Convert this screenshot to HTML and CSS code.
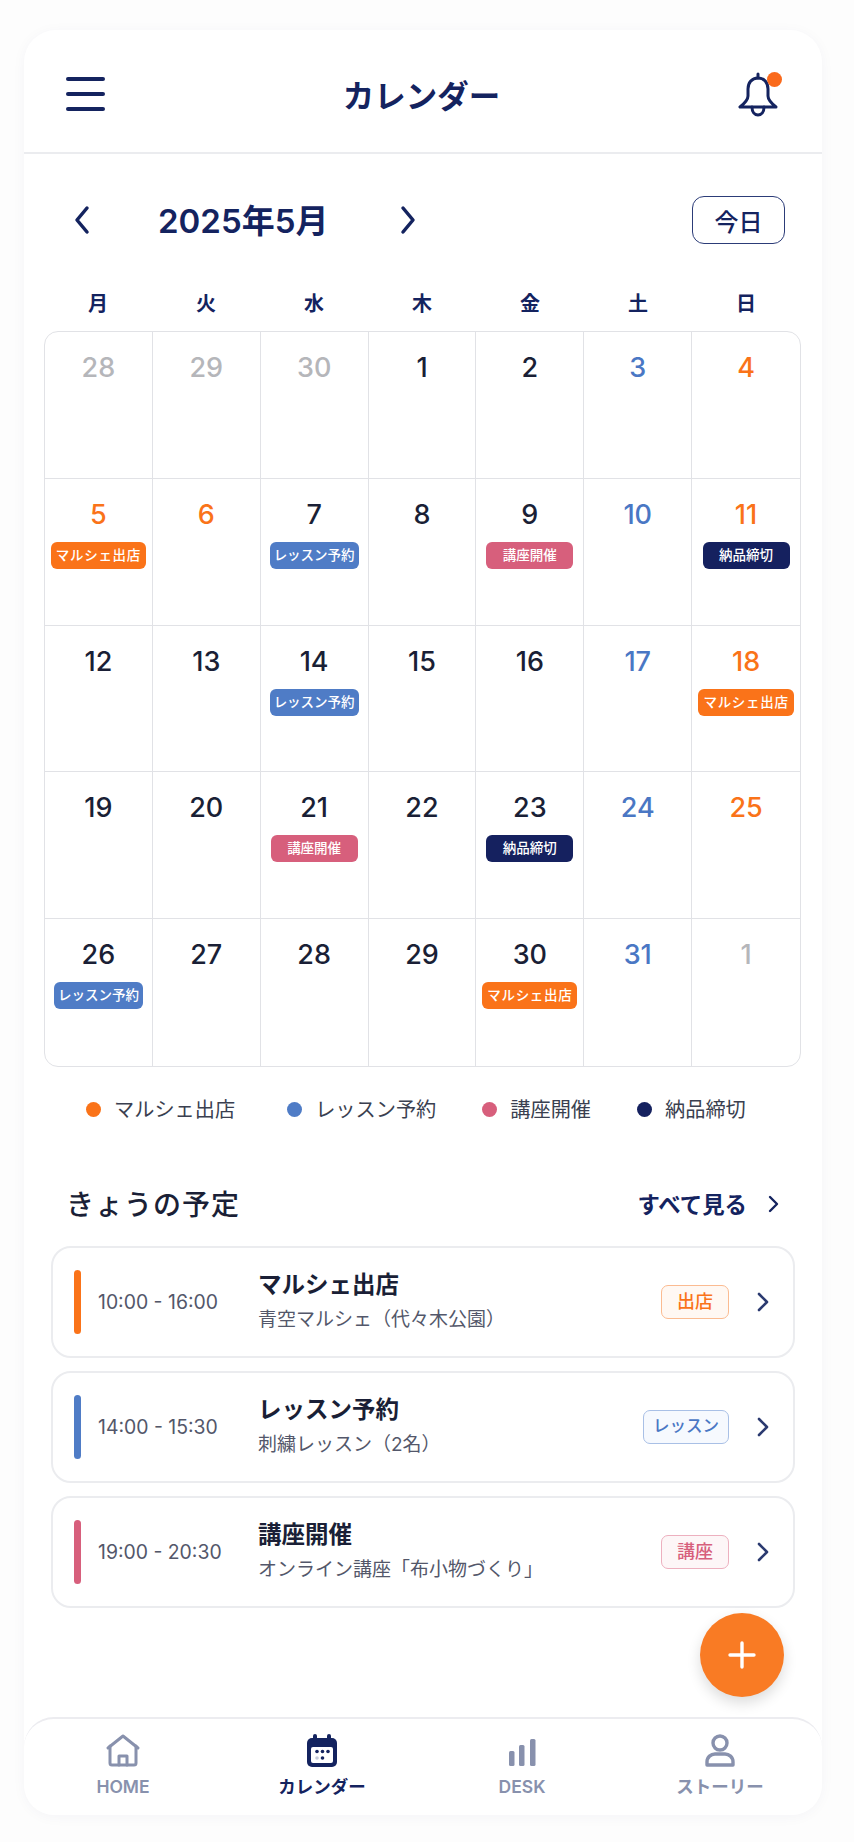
FILE: index.html
```html
<!DOCTYPE html>
<html lang="ja">
<head>
  <meta charset="UTF-8">
  <meta name="viewport" content="width=device-width, initial-scale=1.0">
  <title>カレンダー</title>
  <link rel="stylesheet" href="styles.css">
</head>
<body>
  <div class="phone">
    <header class="topbar">
      <div class="menu"><span></span><span></span><span></span></div>
      <h1 class="topbar-title">カレンダー</h1>
      <div class="bell">
        <svg width="44" height="46" viewBox="0 0 44 46" fill="none" stroke="#14235f" stroke-width="3" stroke-linecap="round" stroke-linejoin="round">
          <path d="M20 3v4"/>
          <path d="M20 7c-6.500 0-10 5-10 11v7c0 4-3 7-8 11h36c-5-4-8-7-8-11v-7c0-6-3.500-11-10-11z"/>
          <path d="M14 36c0 5 2.500 8 6 8s6-3 6-8"/>
        </svg>
        <span class="bell-dot"></span>
      </div>
    </header>

    <div class="month-row">
      <svg class="month-prev" width="20" height="30" viewBox="0 0 20 30" fill="none" stroke="#14235f" stroke-width="3.500" stroke-linecap="round" stroke-linejoin="round"><path d="M15 3L5 15l10 12"/></svg>
      <div class="month-title">2025年5月</div>
      <svg class="month-next" width="20" height="30" viewBox="0 0 20 30" fill="none" stroke="#14235f" stroke-width="3.500" stroke-linecap="round" stroke-linejoin="round"><path d="M5 3l10 12L5 27"/></svg>
      <button class="today">今日</button>
    </div>

    <div class="weekdays">
      <div>月</div><div>火</div><div>水</div><div>木</div><div>金</div><div>土</div><div>日</div>
    </div>

    <div class="grid">
      <div class="cell muted">28</div>
      <div class="cell muted">29</div>
      <div class="cell muted">30</div>
      <div class="cell">1</div>
      <div class="cell">2</div>
      <div class="cell sat">3</div>
      <div class="cell sun">4</div>

      <div class="cell sun">5<span class="tag orange">マルシェ出店</span></div>
      <div class="cell sun">6</div>
      <div class="cell">7<span class="tag blue">レッスン予約</span></div>
      <div class="cell">8</div>
      <div class="cell">9<span class="tag pink">講座開催</span></div>
      <div class="cell sat">10</div>
      <div class="cell sun">11<span class="tag navy">納品締切</span></div>

      <div class="cell">12</div>
      <div class="cell">13</div>
      <div class="cell">14<span class="tag blue">レッスン予約</span></div>
      <div class="cell">15</div>
      <div class="cell">16</div>
      <div class="cell sat">17</div>
      <div class="cell sun">18<span class="tag orange">マルシェ出店</span></div>

      <div class="cell">19</div>
      <div class="cell">20</div>
      <div class="cell">21<span class="tag pink">講座開催</span></div>
      <div class="cell">22</div>
      <div class="cell">23<span class="tag navy">納品締切</span></div>
      <div class="cell sat">24</div>
      <div class="cell sun">25</div>

      <div class="cell">26<span class="tag blue">レッスン予約</span></div>
      <div class="cell">27</div>
      <div class="cell">28</div>
      <div class="cell">29</div>
      <div class="cell">30<span class="tag orange">マルシェ出店</span></div>
      <div class="cell sat">31</div>
      <div class="cell muted">1</div>
    </div>

    <div class="legend">
      <div class="legend-item"><span class="dot orange"></span>マルシェ出店</div>
      <div class="legend-item"><span class="dot blue"></span>レッスン予約</div>
      <div class="legend-item"><span class="dot pink"></span>講座開催</div>
      <div class="legend-item"><span class="dot navy"></span>納品締切</div>
    </div>

    <div class="section-head">
      <h2 class="section-title">きょうの予定</h2>
      <div class="see-all">すべて見る
        <svg class="see-all-arrow" width="14" height="20" viewBox="0 0 14 20" fill="none" stroke="#14235f" stroke-width="2.400" stroke-linecap="round" stroke-linejoin="round"><path d="M3 3l7 7-7 7"/></svg>
      </div>
    </div>

    <div class="events">
      <div class="event">
        <span class="event-bar orange"></span>
        <div class="event-time">10:00 - 16:00</div>
        <div class="event-body">
          <div class="event-name">マルシェ出店</div>
          <div class="event-place">青空マルシェ（代々木公園）</div>
        </div>
        <span class="badge badge-orange">出店</span>
        <svg class="event-arrow" width="14" height="22" viewBox="0 0 14 22" fill="none" stroke="#2b3a70" stroke-width="2.600" stroke-linecap="round" stroke-linejoin="round"><path d="M3 3l8 8-8 8"/></svg>
      </div>
      <div class="event">
        <span class="event-bar blue"></span>
        <div class="event-time">14:00 - 15:30</div>
        <div class="event-body">
          <div class="event-name">レッスン予約</div>
          <div class="event-place">刺繍レッスン（2名）</div>
        </div>
        <span class="badge badge-blue">レッスン</span>
        <svg class="event-arrow" width="14" height="22" viewBox="0 0 14 22" fill="none" stroke="#2b3a70" stroke-width="2.600" stroke-linecap="round" stroke-linejoin="round"><path d="M3 3l8 8-8 8"/></svg>
      </div>
      <div class="event">
        <span class="event-bar pink"></span>
        <div class="event-time">19:00 - 20:30</div>
        <div class="event-body">
          <div class="event-name">講座開催</div>
          <div class="event-place">オンライン講座「布小物づくり」</div>
        </div>
        <span class="badge badge-pink">講座</span>
        <svg class="event-arrow" width="14" height="22" viewBox="0 0 14 22" fill="none" stroke="#2b3a70" stroke-width="2.600" stroke-linecap="round" stroke-linejoin="round"><path d="M3 3l8 8-8 8"/></svg>
      </div>
    </div>

    <div class="fab">
      <svg width="30" height="30" viewBox="0 0 30 30" stroke="#fff" stroke-width="3.400" stroke-linecap="round"><path d="M15 3v24M3 15h24"/></svg>
    </div>

    <nav class="tabbar">
      <div class="tab">
        <svg width="36" height="33" viewBox="0 0 36 33" fill="none" stroke="#8891ad" stroke-width="3" stroke-linecap="round" stroke-linejoin="round">
          <path d="M3 14L18 2l15 12"/>
          <path d="M5 12v17a2 2 0 0 0 2 2h22a2 2 0 0 0 2-2V12"/>
          <path d="M14 31v-9h8v9"/>
        </svg>
        <span>HOME</span>
      </div>
      <div class="tab active">
        <svg width="36" height="33" viewBox="0 0 36 33">
          <rect x="3" y="4" width="30" height="29" rx="5" fill="#14235f"/>
          <rect x="9" y="0" width="4" height="8" rx="2" fill="#14235f"/>
          <rect x="23" y="0" width="4" height="8" rx="2" fill="#14235f"/>
          <rect x="7" y="13" width="22" height="16" rx="2" fill="#fff"/>
          <circle cx="13" cy="17.500" r="1.800" fill="#14235f"/>
          <circle cx="18.500" cy="17.500" r="1.800" fill="#14235f"/>
          <circle cx="24" cy="17.500" r="1.800" fill="#14235f"/>
          <circle cx="13" cy="24" r="1.800" fill="#c5cad9"/>
          <circle cx="18.500" cy="24" r="1.800" fill="#14235f"/>
        </svg>
        <span>カレンダー</span>
      </div>
      <div class="tab">
        <svg width="36" height="33" viewBox="0 0 36 33" fill="#8891ad">
          <rect x="5" y="17" width="5.500" height="15" rx="1.500"/>
          <rect x="15" y="11" width="5.500" height="21" rx="1.500"/>
          <rect x="26" y="5" width="5.500" height="27" rx="1.500"/>
        </svg>
        <span>DESK</span>
      </div>
      <div class="tab">
        <svg width="36" height="33" viewBox="0 0 36 33" fill="none" stroke="#8891ad" stroke-width="3.400" stroke-linecap="round" stroke-linejoin="round">
          <circle cx="18" cy="9" r="7"/>
          <path d="M5 31v-3c0-5 4-8 8-8h10c4 0 8 3 8 8v3z"/>
        </svg>
        <span>ストーリー</span>
      </div>
    </nav>
  </div>
</body>
</html>
```

FILE: styles.css
```css
* {
  box-sizing: border-box;
}

body {
  margin: 0;
  padding: 30px 32px 27px 24px;
  background-color: #fdfdfd;
  font-family: Inter, "Noto Sans CJK JP", sans-serif;
  color: #1a1f36;
}

.phone {
  position: relative;
  height: 1785px;
  background-color: #fff;
  border-radius: 32px;
  box-shadow: 0 2px 14px rgba(20, 35, 95, 0.04);
}

.topbar {
  display: flex;
  justify-content: space-between;
  align-items: center;
  height: 124px;
  padding: 6px 40px 0 42px;
  border-bottom: 2px solid #ebecef;
}

.menu {
  display: flex;
  flex-direction: column;
  gap: 11px;
  width: 39px;
}

.menu span {
  height: 4px;
  border-radius: 2px;
  background-color: #14235f;
}

.topbar-title {
  margin: 0;
  font-size: 31.5px;
  font-weight: 700;
  color: #14235f;
}

.bell {
  position: relative;
  width: 44px;
  height: 46px;
}

.bell-dot {
  position: absolute;
  top: 1px;
  right: 0;
  width: 15px;
  height: 15px;
  border-radius: 50%;
  background-color: #fa6a1c;
}

.month-row {
  display: flex;
  align-items: center;
  height: 48px;
  margin-top: 42px;
  padding: 0 37px 0 48px;
}

.month-title {
  width: 240px;
  margin: -3px 0 0 66px;
  font-size: 33px;
  font-weight: 600;
  color: #14235f;
}

.today {
  width: 93px;
  height: 48px;
  margin-left: auto;
  border: 1.5px solid #2c3c78;
  border-radius: 12px;
  background-color: #fff;
  font-family: inherit;
  font-size: 24px;
  font-weight: 500;
  color: #14235f;
}

.weekdays {
  display: grid;
  grid-template-columns: repeat(7, 108px);
  margin: 42px 0 0 20px;
  height: 36px;
  line-height: 36px;
  text-align: center;
  font-size: 20px;
  font-weight: 600;
  color: #14235f;
}

.grid {
  display: grid;
  grid-template-columns: repeat(7, 1fr);
  grid-auto-rows: 146.8px;
  width: 757px;
  margin: 9px 0 0 20px;
  border: 1px solid #e1e2e6;
  border-radius: 14px;
  overflow: hidden;
}

.cell {
  display: flex;
  flex-direction: column;
  align-items: center;
  padding-top: 19px;
  border-right: 1px solid #e1e2e6;
  border-bottom: 1px solid #e1e2e6;
  font-size: 27px;
  font-weight: 500;
  line-height: 34px;
  color: #1a1f36;
}

.cell:nth-child(7n) {
  border-right: none;
}

.cell:nth-child(n+29) {
  border-bottom: none;
}

.cell.muted {
  color: #b5b6ba;
}

.cell.sat {
  color: #4a77c4;
}

.cell.sun {
  color: #fa7319;
}

.tag {
  margin-top: 10px;
  padding: 0 4px;
  height: 27px;
  line-height: 26px;
  border-radius: 6px;
  font-size: 13.5px;
  font-weight: 500;
  color: #fff;
  white-space: nowrap;
}

.tag.orange {
  padding: 0 5px;
  letter-spacing: 0.7px;
}

.tag.pink,
.tag.navy {
  padding: 0 16.5px;
}

.orange {
  background-color: #fa7319;
}

.blue {
  background-color: #4f7cc6;
}

.pink {
  background-color: #d75f7c;
}

.navy {
  background-color: #15215f;
}

.legend {
  display: flex;
  margin: 29px 0 0 62px;
  height: 28px;
  font-size: 20.2px;
  line-height: 28px;
  color: #3a3f50;
}

.legend-item {
  display: flex;
  align-items: center;
  gap: 13px;
  margin-right: 46px;
}

.legend-item:first-child {
  margin-right: 52px;
}

.dot {
  width: 15px;
  height: 15px;
  border-radius: 50%;
}

.section-head {
  display: flex;
  justify-content: space-between;
  align-items: center;
  margin: 59px 0 0;
  padding: 0 41px 0 42px;
  height: 40px;
}

.section-title {
  margin: 0;
  font-size: 28px;
  font-weight: 500;
  letter-spacing: 1px;
  color: #1a1f36;
}

.see-all {
  display: flex;
  align-items: center;
  gap: 20px;
  font-size: 22.4px;
  font-weight: 600;
  color: #14235f;
}

.see-all-arrow {
  margin-top: 3px;
}

.events {
  display: flex;
  flex-direction: column;
  gap: 13px;
  margin: 23px 27px 0;
}

.event {
  display: flex;
  align-items: center;
  height: 112px;
  padding: 0 23px 0 21px;
  border: 2px solid #ebecef;
  border-radius: 20px;
  background-color: #fff;
}

.event-bar {
  flex: none;
  width: 7px;
  height: 64px;
  border-radius: 4px;
}

.event-time {
  width: 160px;
  margin-left: 17px;
  font-size: 19.4px;
  color: #53576a;
}

.event-body {
  flex: 1;
}

.event-name {
  margin-top: -2px;
  font-size: 23.5px;
  line-height: 32px;
  font-weight: 600;
  color: #1a1f36;
}

.event-place {
  margin-top: 6px;
  font-size: 19px;
  line-height: 26px;
  color: #53576a;
}

.badge {
  height: 34px;
  line-height: 31px;
  padding: 0 15px;
  margin-right: 27px;
  border-radius: 7px;
  border: 1.5px solid;
  font-size: 18px;
  font-weight: 500;
}

.badge-orange {
  border-color: #fbbb91;
  background-color: #fff8f3;
  color: #fa7319;
}

.badge-blue {
  padding: 0 9px;
  font-size: 16.5px;
  border-color: #a9c0e6;
  background-color: #f6f9fe;
  color: #4a77c4;
}

.badge-pink {
  border-color: #edb0bf;
  background-color: #fdf6f7;
  color: #d75f7c;
}

.event-arrow {
  flex: none;
}

.fab {
  position: absolute;
  right: 38px;
  top: 1583px;
  display: flex;
  justify-content: center;
  align-items: center;
  width: 84px;
  height: 84px;
  border-radius: 50%;
  background-color: #f97b24;
  box-shadow: 0 6px 14px rgba(0, 0, 0, 0.14);
}

.tabbar {
  position: absolute;
  left: 0;
  right: 0;
  bottom: 0;
  display: grid;
  grid-template-columns: 198px 200px 200px 196px;
  height: 98px;
  padding-top: 15px;
  border-top: 2px solid #ececf0;
  border-radius: 30px;
  background-color: #fff;
}

.tab {
  display: flex;
  flex-direction: column;
  align-items: center;
  gap: 8px;
  font-size: 17.5px;
  line-height: 24px;
  font-weight: 600;
  color: #8891ad;
}

.tab.active {
  color: #14235f;
}
```
